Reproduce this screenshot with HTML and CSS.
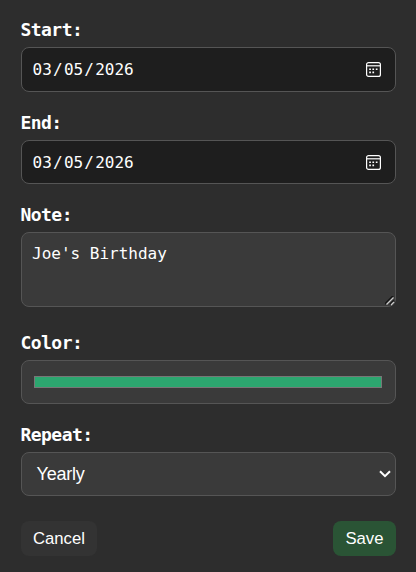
FILE: index.html
```
<!DOCTYPE html>
<html lang="en">
<head>
<meta charset="utf-8">
<title>Edit event</title>
<link rel="stylesheet" href="styles.css">
</head>
<body>
<form class="form">
  <div class="field field-start">
    <label class="label">Start:</label>
    <div class="control date">
      <div class="date-text"><span>03</span><span>/</span><span>05</span><span>/</span><span>2026</span></div>
      <svg class="calendar" viewBox="0 0 15 15"><rect x=".6" y=".6" width="13.8" height="13.8" rx="2"/><path d="M1 3.8h13"/><g class="dots"><path d="M3.2 6.4h1.7v1.7H3.2zM6.4 6.4h1.7v1.7H6.4zM9.8 6.4h1.7v1.7H9.8zM3.2 9.6h1.7v1.7H3.2zM6.4 9.6h1.7v1.7H6.4z"/></g></svg>
    </div>
  </div>
  <div class="field">
    <label class="label">End:</label>
    <div class="control date">
      <div class="date-text"><span>03</span><span>/</span><span>05</span><span>/</span><span>2026</span></div>
      <svg class="calendar" viewBox="0 0 15 15"><rect x=".6" y=".6" width="13.8" height="13.8" rx="2"/><path d="M1 3.8h13"/><g class="dots"><path d="M3.2 6.4h1.7v1.7H3.2zM6.4 6.4h1.7v1.7H6.4zM9.8 6.4h1.7v1.7H9.8zM3.2 9.6h1.7v1.7H3.2zM6.4 9.6h1.7v1.7H6.4z"/></g></svg>
    </div>
  </div>
  <div class="field field-note">
    <label class="label" for="note">Note:</label>
    <div class="note-wrap">
      <textarea class="control note" id="note">Joe's Birthday</textarea>
      <svg class="grip" viewBox="0 0 10 10"><path class="grip-dark" d="M0 8L8 0M5 8.5L9 4.5"/><path class="grip-light" d="M1.5 8.5L8.5 1.5M6 9L9 6"/></svg>
    </div>
  </div>
  <div class="field">
    <label class="label">Color:</label>
    <div class="control color"><div class="swatch"></div></div>
  </div>
  <div class="field">
    <label class="label">Repeat:</label>
    <div class="control select"><span>Yearly</span>
      <svg class="chevron" viewBox="0 0 12 8"><path d="M1 1.2l5 5 5-5"/></svg>
    </div>
  </div>
  <div class="actions">
    <button type="button" class="button">Cancel</button>
    <button type="button" class="button save">Save</button>
  </div>
</form>
</body>
</html>
```
FILE: styles.css
```
* { box-sizing: border-box; }
body {
  margin: 0;
  background: #2d2d2d;
  color: #fff;
  font: 16px "DejaVu Sans Mono", monospace;
  overflow: hidden;
}
.form { padding: 17px 20px 0 21px; }
.field { margin-bottom: 18px; }
.field-note { margin-bottom: 23px; }
.label {
  display: block;
  height: 30px;
  margin-left: -.5px;
  line-height: 25px;
  font-size: 18px;
  font-weight: bold;
  letter-spacing: -.55px;
}
.control {
  display: flex;
  align-items: center;
  width: 100%;
  height: 44px;
  border: 1px solid #555;
  border-radius: 8px;
  background: #3a3a3a;
  color: #fff;
}
.field-start .control { height: 45px; }
.date {
  justify-content: space-between;
  padding: 0 14px 0 10px;
  background: #1e1e1e;
}
.date-text span { padding: 0 .6px; }
.calendar {
  width: 15px;
  height: 15px;
  fill: none;
  stroke: #fff;
  stroke-width: 1.2;
}
.dots { fill: #fff; stroke: none; }
.note-wrap { position: relative; height: 75px; }
.note {
  display: block;
  height: 75px;
  padding: 11px 10px;
  font: 16px/20px "DejaVu Sans Mono", monospace;
  resize: none;
  outline: none;
}
.grip {
  position: absolute;
  right: 1px;
  bottom: 1px;
  width: 10px;
  height: 10px;
  fill: none;
}
.grip-dark { stroke: #151515; stroke-width: 1.7; }
.grip-light { stroke: #ccc; stroke-width: 1.3; }
.color { padding: 0 13px 0 12px; }
.swatch {
  width: 100%;
  height: 12px;
  border: 1px solid #777;
  background: #2ca66f;
}
.select {
  justify-content: space-between;
  padding: 0 4px 0 14.5px;
  font: 18px "Liberation Sans", sans-serif;
  letter-spacing: -.2px;
}
.chevron {
  width: 12px;
  height: 8px;
  fill: none;
  stroke: #fff;
  stroke-width: 2;
}
.actions {
  display: flex;
  justify-content: space-between;
  padding-top: 7px;
}
.button {
  height: 35px;
  padding: 0 12px;
  border: 0;
  border-radius: 8px;
  background: #333;
  color: #fff;
  font: 16.7px "Liberation Sans", sans-serif;
}
.save {
  padding: 0 12.5px;
  background: #2a5435;
}
```
